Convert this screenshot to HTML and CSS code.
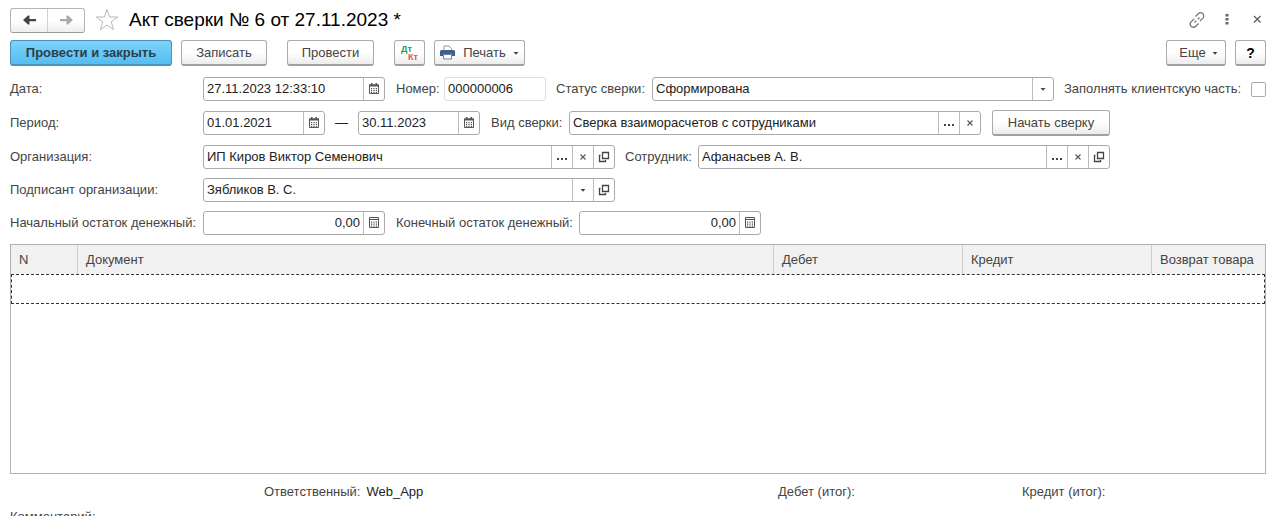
FILE: index.html
```html
<!DOCTYPE html>
<html lang="ru">
<head>
<meta charset="utf-8">
<title>Акт сверки № 6 от 27.11.2023 *</title>
<link rel="stylesheet" href="styles.css">
</head>
<body>
<svg class="sprite" aria-hidden="true">
  <symbol id="calendar" viewBox="0 0 10 12"><path d="M.5 2h9v8.500h-9z" fill="#fff" stroke="#555"/><path d="M0 1.500h10v2H0zM2 0h1.500v2H2zM6.500 0H8v2H6.500zM2 5h1.200v1.200H2zM4.400 5h1.200v1.200H4.400zM6.800 5H8v1.200H6.800zM2 7h1.200v1.200H2zM4.400 7h1.200v1.200H4.400zM6.800 7H8v1.200H6.800zM2 9h1.200v1H2zM4.400 9h1.200v1H4.400zM6.800 9H8v1H6.800z" fill="#555"/></symbol>
  <symbol id="calc" viewBox="0 0 10 12"><path d="M.5 .5h9v10h-9z" fill="#fff" stroke="#555"/><path d="M0 2h10v1H0zM2 4.500h1.200v1.200H2zM4.400 4.500h1.200v1.200H4.400zM6.800 4.500H8v1.200H6.800zM2 6.500h1.200v1.200H2zM4.400 6.500h1.200v1.200H4.400zM6.800 6.500H8v1.200H6.800zM2 8.500h1.200v1.200H2zM4.400 8.500h1.200v1.200H4.400zM6.800 8.500H8v1.200H6.800z" fill="#555"/></symbol>
  <symbol id="open" viewBox="0 0 12 12"><path d="M4.500 1.500h6v6h-6zM2.500 4.500h-1v6h6v-1.500" fill="none" stroke="#444" stroke-width="1.300"/></symbol>
  <symbol id="cross" viewBox="0 0 12 12"><path d="M3.500 3.500l5 5M8.500 3.500l-5 5" fill="none" stroke="#555" stroke-width="1.100"/></symbol>
  <symbol id="dots" viewBox="0 0 12 12"><path d="M1 7h2v2H1zM5 7h2v2H5zM9 7h2v2H9z" fill="#444"/></symbol>
  <symbol id="caret" viewBox="0 0 12 12"><path d="M3.500 5h5L6 7.700z" fill="#444"/></symbol>
</svg>
<main class="window">
  <header class="titlebar">
    <div class="history">
      <button class="history-btn" type="button" aria-label="Назад"><svg width="15" height="12" viewBox="0 0 15 12"><path d="M1 6l5-4.500h1.500V5H14v2.200H7.500v3.300H6z" fill="#444"/></svg></button>
      <button class="history-btn" type="button" aria-label="Вперед"><svg width="15" height="12" viewBox="0 0 15 12"><path d="M14 6L9 1.500H7.500V5H1v2.200h6.500v3.300H9z" fill="#aaa"/></svg></button>
    </div>
    <button class="icon-btn star" type="button" aria-label="В избранное"><svg width="24" height="24" viewBox="0 0 24 24"><path d="M12 1.500l2.600 7.500h8.200l-6.600 4.900 2.500 7.900-6.700-4.800-6.700 4.800 2.500-7.900L1.200 9h8.200z" fill="#fff" stroke="#b8b8b8"/></svg></button>
    <h1 class="title">Акт сверки № 6 от 27.11.2023 *</h1>
    <div class="window-tools">
      <button class="icon-btn" type="button" aria-label="Ссылка"><svg width="16" height="16" viewBox="0 0 16 16"><path d="M6.500 4.500l2.700-2.700a3.100 3.100 0 0 1 4.700 4.300L11 9M9.500 11.500l-2.700 2.700a3.100 3.100 0 0 1-4.700-4.300L5 7M5.500 10.500L7.200 8.800M8.800 7.200l1.700-1.700" fill="none" stroke="#777" stroke-width="1.300"/></svg></button>
      <button class="icon-btn" type="button" aria-label="Меню"><svg width="16" height="16" viewBox="0 0 16 16"><path d="M6.500 2h3v2.500h-3zM6.500 6h3v2.500h-3zM6.500 10h3v2.500h-3z" fill="#666"/></svg></button>
      <button class="icon-btn" type="button" aria-label="Закрыть"><svg width="16" height="16" viewBox="0 0 16 16"><path d="M5 4l6.500 6.500M11.500 4L5 10.500" fill="none" stroke="#555" stroke-width="1.100"/></svg></button>
    </div>
  </header>

  <div class="toolbar">
    <button class="btn btn-primary" type="button">Провести и закрыть</button>
    <button class="btn btn-save" type="button">Записать</button>
    <button class="btn btn-post" type="button">Провести</button>
    <button class="btn btn-dtkt" type="button"><span class="dt">Дт</span><span class="kt">Кт</span></button>
    <button class="btn btn-print" type="button"><svg width="15" height="15" viewBox="0 0 15 15"><path d="M4 5V1h5l2.500 2.500V5" fill="#fff" stroke="#8a9bb0"/><path d="M1.500 5h12q1.500 0 1.500 1.500V11h-3V9H3v2H0V6.500Q0 5 1.500 5z" fill="#3c5f8c"/><path d="M3.500 9.500h8v4.500h-8z" fill="#fff" stroke="#6d829f"/></svg>Печать<svg class="caret" width="12" height="12"><use href="#caret"/></svg></button>
    <button class="btn btn-more" type="button">Еще<svg class="caret" width="12" height="12"><use href="#caret"/></svg></button>
    <button class="btn btn-help" type="button">?</button>
  </div>

  <form class="form">
    <div class="row">
      <label class="label-main" for="date">Дата:</label>
      <div class="field field-datetime"><input id="date" type="text" value="27.11.2023 12:33:10"><button type="button" aria-label="Календарь"><svg width="10" height="12"><use href="#calendar"/></svg></button></div>
      <label class="label-number" for="number">Номер:</label>
      <div class="field field-number"><input id="number" type="text" value="000000006" readonly></div>
      <label class="label-status" for="status">Статус сверки:</label>
      <div class="field field-grow"><input id="status" type="text" value="Сформирована"><button type="button" aria-label="Выбрать статус"><svg width="12" height="12"><use href="#caret"/></svg></button></div>
      <label class="label-client" for="client">Заполнять клиентскую часть:</label>
      <input class="check" id="client" type="checkbox">
    </div>
    <div class="row row-inset">
      <label class="label-main" for="from">Период:</label>
      <div class="field field-date"><input id="from" type="text" value="01.01.2021"><button type="button" aria-label="Календарь"><svg width="10" height="12"><use href="#calendar"/></svg></button></div>
      <span class="dash">—</span>
      <div class="field field-date"><input type="text" value="30.11.2023" aria-label="Конец периода"><button type="button" aria-label="Календарь"><svg width="10" height="12"><use href="#calendar"/></svg></button></div>
      <label class="label-kind" for="kind">Вид сверки:</label>
      <div class="field field-grow"><input id="kind" type="text" value="Сверка взаиморасчетов с сотрудниками"><button type="button" aria-label="Выбрать"><svg width="12" height="12"><use href="#dots"/></svg></button><button type="button" aria-label="Очистить"><svg width="12" height="12"><use href="#cross"/></svg></button></div>
      <button class="btn btn-start" type="button">Начать сверку</button>
    </div>
    <div class="row row-inset">
      <label class="label-main" for="org">Организация:</label>
      <div class="field field-wide"><input id="org" type="text" value="ИП Киров Виктор Семенович"><button type="button" aria-label="Выбрать"><svg width="12" height="12"><use href="#dots"/></svg></button><button type="button" aria-label="Очистить"><svg width="12" height="12"><use href="#cross"/></svg></button><button type="button" aria-label="Открыть"><svg width="12" height="12"><use href="#open"/></svg></button></div>
      <label class="label-employee" for="employee">Сотрудник:</label>
      <div class="field field-grow"><input id="employee" type="text" value="Афанасьев А. В."><button type="button" aria-label="Выбрать"><svg width="12" height="12"><use href="#dots"/></svg></button><button type="button" aria-label="Очистить"><svg width="12" height="12"><use href="#cross"/></svg></button><button type="button" aria-label="Открыть"><svg width="12" height="12"><use href="#open"/></svg></button></div>
    </div>
    <div class="row">
      <label class="label-main" for="signer">Подписант организации:</label>
      <div class="field field-wide"><input id="signer" type="text" value="Зябликов В. С."><button type="button" aria-label="Выбрать"><svg width="12" height="12"><use href="#caret"/></svg></button><button type="button" aria-label="Открыть"><svg width="12" height="12"><use href="#open"/></svg></button></div>
    </div>
    <div class="row">
      <label class="label-main" for="opening">Начальный остаток денежный:</label>
      <div class="field field-datetime field-money"><input id="opening" type="text" value="0,00"><button type="button" aria-label="Калькулятор"><svg width="10" height="12"><use href="#calc"/></svg></button></div>
      <label class="label-closing" for="closing">Конечный остаток денежный:</label>
      <div class="field field-datetime field-money"><input id="closing" type="text" value="0,00"><button type="button" aria-label="Калькулятор"><svg width="10" height="12"><use href="#calc"/></svg></button></div>
    </div>
  </form>

  <div class="grid-box">
    <table class="grid">
      <colgroup><col class="col-n"><col><col class="col-sum"><col class="col-sum"><col class="col-return"></colgroup>
      <thead><tr><th scope="col">N</th><th scope="col">Документ</th><th scope="col">Дебет</th><th scope="col">Кредит</th><th scope="col">Возврат товара</th></tr></thead>
      <tbody><tr><td class="current" colspan="5"></td></tr></tbody>
    </table>
  </div>

  <footer class="summary">
    <div class="responsible"><span>Ответственный:</span><span class="value">Web_App</span></div>
    <div class="total">Дебет (итог):</div>
    <div class="total">Кредит (итог):</div>
  </footer>
  <div class="comment">Комментарий:</div>
</main>
</body>
</html>
```
FILE: styles.css
```css
* { box-sizing: border-box; }
html { overflow: hidden; }
body {
  margin: 0;
  background: #fff;
  color: #444;
  font: 13px/16px "Liberation Sans", Arial, sans-serif;
}
button, input { font: inherit; color: inherit; }
button { padding: 0; }
svg { display: block; flex: none; }
.sprite { display: none; }
.window { padding: 7px 7px 0 10px; }

.titlebar { display: flex; align-items: center; height: 26px; }
.history {
  display: flex;
  width: 75px;
  height: 25px;
  border: 1px solid #b4b4b4;
  border-bottom-color: #999;
  border-radius: 3px;
  background: linear-gradient(#fff 50%, #eee);
}
.history-btn {
  flex: 1;
  display: flex;
  align-items: center;
  justify-content: center;
  border: 0;
  background: none;
}
.history-btn + .history-btn { border-left: 1px solid #d0d0d0; }
.icon-btn { border: 0; background: none; }
.star { margin: 0 10px; }
.title { margin: 0; color: #000; font-size: 19px; line-height: 24px; font-weight: 400; }
.window-tools { display: flex; gap: 14px; margin: 0 1px 0 auto; }

.toolbar { display: flex; align-items: center; margin-top: 7px; }
.btn {
  display: flex;
  align-items: center;
  justify-content: center;
  height: 26px;
  border: 1px solid #aaa;
  border-bottom: 2px solid #a0a0a0;
  border-radius: 3px;
  background: linear-gradient(#fff 50%, #ececec);
  white-space: nowrap;
}
.btn-primary {
  width: 162px;
  border-color: #4b93b8;
  background: linear-gradient(#7dd2fb, #55bdf2);
  color: #2c3e48;
  font-weight: 700;
}
.btn-save { width: 86px; margin-left: 9px; }
.btn-post { width: 87px; margin-left: 20px; }
.btn-dtkt {
  flex-direction: column;
  align-items: stretch;
  width: 31px;
  margin-left: 20px;
  padding: 0 6px;
  font-size: 9px;
  line-height: 8px;
  font-weight: 700;
}
.dt { color: #259b55; text-align: left; }
.kt { color: #ee5050; text-align: right; }
.btn-print { width: 91px; margin-left: 9px; gap: 8px; padding-left: 3px; }
.btn-print .caret { margin-left: -4px; }
.btn-more { width: 60px; margin-left: auto; gap: 3px; padding-left: 8px; }
.btn-help { width: 31px; margin-left: 9px; color: #000; font-size: 14px; font-weight: 700; }
.btn-start { width: 118px; margin-left: 11px; }

.form { display: grid; gap: 9px; margin-top: 11px; }
.row { display: flex; align-items: center; min-height: 24px; }
.row-inset { margin-right: 156px; }
.row label { flex: none; white-space: nowrap; }
.row .label-main { width: 193px; }
.label-number { width: 59px; padding-left: 11px; }
.label-status { width: 106px; padding-left: 10px; }
.label-client { width: 197px; padding-left: 10px; }
.label-kind { width: 89px; padding-left: 11px; }
.label-employee { width: 83px; padding-left: 10px; }
.label-closing { width: 194px; padding-left: 11px; }
.field {
  display: flex;
  flex: none;
  height: 24px;
  border: 1px solid #aaa;
  border-radius: 3px;
  background: #fff;
  color: #222;
}
.field input {
  flex: 1;
  min-width: 0;
  padding: 0 3px;
  border: 0;
  outline: 0;
  background: none;
}
.field button {
  display: flex;
  align-items: center;
  justify-content: center;
  width: 21px;
  border: 0;
  border-left: 1px solid #bbb;
  background: none;
}
.field-datetime { width: 182px; }
.field-date { width: 122px; }
.field-number { width: 102px; border-color: #ddd; }
.field-wide { width: 412px; }
.field-grow { flex: 1; min-width: 120px; }
.field-money input { text-align: right; }
.dash { width: 33px; text-align: center; color: #222; }
.check {
  appearance: none;
  width: 15px;
  height: 15px;
  margin: 0;
  border: 1px solid #aaa;
  border-radius: 2px;
  background: #fff;
}

.grid-box { min-height: 230px; margin-top: 9px; border: 1px solid #b0b0b0; }
.grid { width: 100%; border-collapse: separate; border-spacing: 0; table-layout: fixed; }
.grid th {
  height: 29px;
  padding: 0 8px;
  border-left: 1px solid #ccc;
  background: #f1f1f1;
  font-weight: 400;
  text-align: left;
  white-space: nowrap;
}
.grid th:first-child { border-left: 0; }
.col-n { width: 66px; }
.col-sum { width: 189px; }
.col-return { width: 114px; }
.current { height: 30px; padding: 0; border: 1px dashed #333; }

.summary { display: flex; margin-top: 10px; }
.responsible { display: flex; flex: 1; gap: 6px; padding-left: 254px; }
.value { color: #222; }
.total { width: 244px; }
.comment { margin-top: 9px; }
```
